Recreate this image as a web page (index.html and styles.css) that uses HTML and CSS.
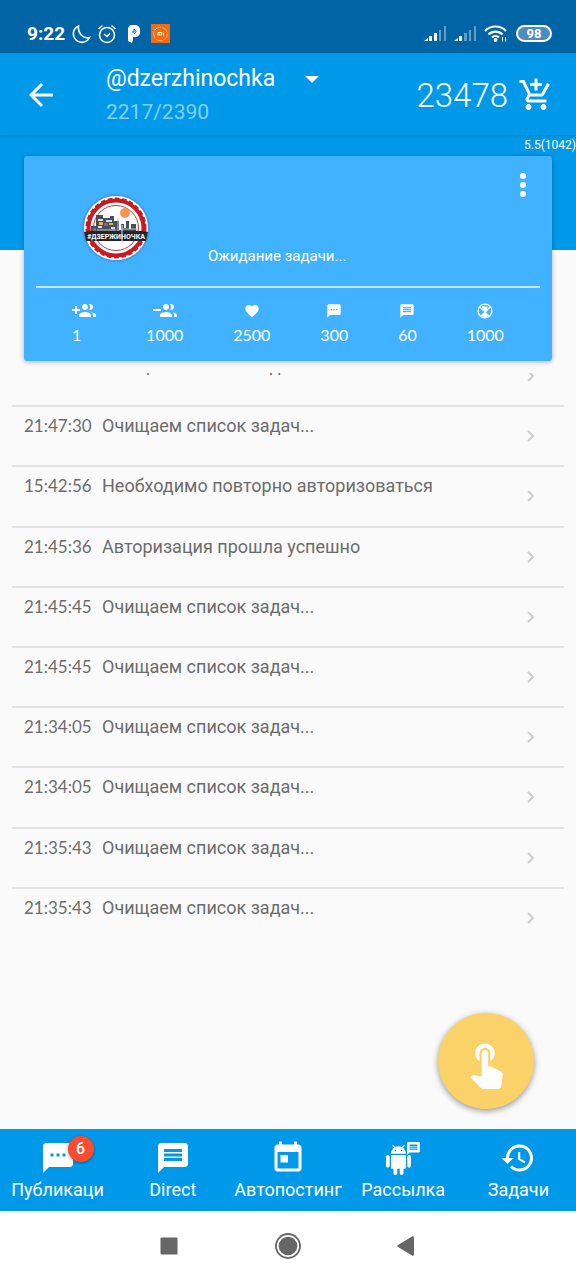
FILE: index.html
```html
<!DOCTYPE html>
<html lang="ru">
<head>
    <meta charset="UTF-8">
    <meta name="viewport" content="width=device-width, initial-scale=1.0">
    <title>@dzerzhinochka</title>
    <link rel="stylesheet" href="styles.css">
</head>
<body>

    <div class="status-bar">
        <span class="clock">9:22</span>
        <svg class="moon" width="20" height="20" viewBox="0 0 20 20"><path d="M7 2A8.500 8.500 0 1 0 18 13.500A9 10 0 0 1 7 2z" transform="translate(-.5 0)"/></svg>
        <svg class="alarm" width="20" height="20" viewBox="0 0 20 20"><circle cx="10" cy="11" r="7.500"/><path d="M1.500 5l4-3.500M18.500 5l-4-3.500M7 10l3 2.500 3-3"/></svg>
        <svg class="parking" width="14" height="20" viewBox="0 0 14 20"><path d="M3 1h7l3 3v6l-3 3H6v3l-1 3-4-2V4z" fill="#fff"/><path d="M5 8h2V5l2 2.500-2 2.500" fill="none" stroke="#0064a5"/></svg>
        <svg class="mi" width="19" height="19" viewBox="0 0 19 19"><path d="M0 0h19v19H0z" fill="#f26b10"/><circle cx="9.500" cy="10" r="6.800" fill="none" stroke="#ffc48e" stroke-width=".8" stroke-dasharray="7 1.500"/><path d="M7 11.500v-3h3.500v3M8.800 9.500v2M12.500 8.500v3M3.500 6l2.500-2" fill="none" stroke="#fff"/></svg>

        <div class="status-right">
            <svg width="22" height="16" viewBox="0 0 22 16"><path d="M0 15l4-3v3zM5 10h3v5H5zM10 7h3v8h-3z" fill="#fff"/><path d="M15 4h2v11h-2zM20 0h2v15h-2z" fill="#5f9cc8"/></svg>
            <svg width="22" height="16" viewBox="0 0 22 16"><path d="M0 15l4-3v3zM5 10h3v5H5z" fill="#fff"/><path d="M10 7h3v8h-3zM15 4h2v11h-2zM20 0h2v15h-2z" fill="#5f9cc8"/></svg>
            <svg class="wifi" width="24" height="19" viewBox="0 0 24 19"><path d="M1 7a14.500 14.500 0 0 1 21 0M4.500 10.500a10 10 0 0 1 14 0M8 13.500a5 5 0 0 1 7 0" fill="none" stroke="#fff" stroke-width="2.200"/><circle cx="11.500" cy="16" r="1.900" fill="#fff"/><path d="M18.500 13v4.500M21.500 13v4.500" stroke="#fff"/></svg>
            <span class="battery">98</span>
        </div>
    </div>

    <header class="app-bar">
        <button class="icon-btn back" aria-label="Назад">
            <svg width="36" height="36" viewBox="0 0 24 24"><path d="M20 11H7.830l5.590-5.590L12 4l-8 8 8 8 1.410-1.410L7.830 13H20v-2z"/></svg>
        </button>
        <div class="account">
            <label class="account-select">
                <select aria-label="Аккаунт">
                    <option>@dzerzhinochka</option>
                </select>
                <svg width="14" height="7" viewBox="0 0 14 7"><path d="M0 0h14L7 7z"/></svg>
            </label>
            <span class="account-count">2217/2390</span>
        </div>
        <span class="balance">23478</span>
        <button class="icon-btn" aria-label="Купить">
            <svg width="36" height="36" viewBox="0 0 24 24"><path d="M11 9h2V6h3V4h-3V1h-2v3H8v2h3v3zm-4 9c-1.100 0-1.990.9-1.990 2S5.900 22 7 22s2-.9 2-2-.9-2-2-2zm10 0c-1.100 0-1.990.9-1.990 2s.89 2 1.990 2 2-.9 2-2-.9-2-2-2zm-9.830-3.250l.03-.12.9-1.630h7.450c.75 0 1.410-.41 1.750-1.030l3.860-7.010L19.420 4h-.01l-1.100 2-2.760 5H8.530l-.13-.27L6.160 6l-.95-2-.94-2H1v2h2l3.600 7.590-1.350 2.450c-.16.28-.25.61-.25.96 0 1.100.9 2 2 2h12v-2H7.420c-.13 0-.25-.11-.25-.25z"/></svg>
        </button>
    </header>

    <main>
        <div class="hero">
            <span class="version">5.5(1042)</span>
        </div>

        <section class="card">
            <div class="card-top">
                <svg class="avatar" width="68" height="68" viewBox="0 0 68 68">
                    <circle cx="34" cy="34" r="33" fill="#fff" stroke="#3e9ce8" stroke-width="2"/>
                    <circle cx="34" cy="34" r="27.500" fill="#fff" stroke="#c91a22" stroke-width="4"/>
                    <circle cx="34" cy="34" r="28.500" fill="none" stroke="#c91a22" stroke-width="4" stroke-dasharray="4.500 2.500"/>
                    <circle cx="34" cy="34" r="22.500" fill="#fff" stroke="#b8404a"/>
                    <circle cx="43" cy="19" r="5" fill="#f79552"/>
                    <path d="M9 38v-6h5V21h7v3h7v-2h4v5h5v9h2v-6h3v4h2v-7h3v8h2v-5h5v10z" fill="#494f58"/>
                    <path d="M16 25h5v2h-5zM24 26h6v2h-6zM16 32h4v2h-4zM29 33h4v2h-4z" fill="#d7dde4"/>
                    <path d="M17 28h4v3h-4zM27 29h4v2h-4z" fill="#dfb449"/>
                    <path d="M22 29h4v3h-4zM11 34h3v3h-3zM31 35h4v3h-4z" fill="#8260a0"/>
                    <path d="M15 36h18M39 35h16M36 24v14" stroke="#b6c0c7" fill="none"/>
                    <path d="M2 38l7-1h50l7 1-2 9H4z" fill="#22262a"/>
                    <text x="34" y="45" text-anchor="middle">#ДЗЕРЖИНОЧКА</text>
                    <path d="M40 31v19" stroke="#dce0e2" stroke-width="1"/>
                </svg>
                <p class="card-status">Ожидание задачи...</p>
                <button class="icon-btn menu" aria-label="Меню">
                    <svg width="8" height="24" viewBox="0 0 8 24"><circle cx="4" cy="3" r="3"/><circle cx="4" cy="12" r="3"/><circle cx="4" cy="21" r="3"/></svg>
                </button>
            </div>
            <div class="stats">
                <div class="stat follow">
                    <svg width="24" height="24" viewBox="0 0 24 24"><path d="M8 10H5V7H3v3H0v2h3v3h2v-3h3v-2zm10 1c1.660 0 2.990-1.340 2.990-3S19.660 5 18 5c-.32 0-.63.05-.91.14.57.81.9 1.790.9 2.860s-.34 2.040-.9 2.860c.28.09.59.14.91.14zm-5 0c1.660 0 2.990-1.340 2.990-3S14.660 5 13 5c-1.660 0-3 1.340-3 3s1.340 3 3 3zm6.620 2.160c.83.73 1.380 1.660 1.380 2.840v2h3v-2c0-1.540-2.370-2.490-4.380-2.840zM13 13c-2 0-6 1-6 3v2h12v-2c0-2-4-3-6-3z"/></svg>
                    <span>1</span>
                </div>
                <div class="stat">
                    <svg width="24" height="24" viewBox="0 0 24 24"><path d="M0 10h8v2H0zm18 1c1.660 0 2.990-1.340 2.990-3S19.660 5 18 5c-.32 0-.63.05-.91.14.57.81.9 1.790.9 2.860s-.34 2.040-.9 2.860c.28.09.59.14.91.14zm-5 0c1.660 0 2.990-1.340 2.990-3S14.660 5 13 5c-1.660 0-3 1.340-3 3s1.340 3 3 3zm6.620 2.160c.83.73 1.380 1.660 1.380 2.840v2h3v-2c0-1.540-2.370-2.490-4.380-2.840zM13 13c-2 0-6 1-6 3v2h12v-2c0-2-4-3-6-3z"/></svg>
                    <span>1000</span>
                </div>
                <div class="stat">
                    <svg width="16" height="24" viewBox="0 0 24 24"><path d="M12 21.350l-1.450-1.320C5.400 15.360 2 12.280 2 8.500 2 5.420 4.420 3 7.500 3c1.740 0 3.410.81 4.500 2.090C13.090 3.810 14.760 3 16.500 3 19.580 3 22 5.420 22 8.500c0 3.780-3.400 6.860-8.550 11.540L12 21.350z"/></svg>
                    <span>2500</span>
                </div>
                <div class="stat">
                    <svg width="16" height="24" viewBox="0 0 24 24"><path d="M20 2H4c-1.100 0-1.990.9-1.990 2L2 22l4-4h14c1.100 0 2-.9 2-2V4c0-1.100-.9-2-2-2zM9 11H7V9h2v2zm4 0h-2V9h2v2zm4 0h-2V9h2v2z"/></svg>
                    <span>300</span>
                </div>
                <div class="stat">
                    <svg width="16" height="24" viewBox="0 0 24 24"><path d="M20 2H4c-1.100 0-1.990.9-1.990 2L2 22l4-4h14c1.100 0 2-.9 2-2V4c0-1.100-.9-2-2-2zM6 9h12v2H6V9zm12 5H6v-2h12v2zm0-6H6V6h12v2z"/></svg>
                    <span>60</span>
                </div>
                <div class="stat">
                    <svg width="16" height="24" viewBox="0 0 16 16"><circle cx="8" cy="8" r="6.900" fill="none" stroke="#fff" stroke-width="1.400"/><path d="M5 3.500h5.500l-.5 3.500-1.500 2 4 3.500q-4.500 3-9 0l4-3.500L5.500 7z"/><path d="M3 4.500l3 2.500M13 4l-4 4.500" fill="none" stroke="#fff" stroke-width="1.200"/></svg>
                    <span>1000</span>
                </div>
            </div>
        </section>

        <section class="log">
            <ul>
                <li><time>21:47:30</time><span>Очищаем список задач...</span><svg width="8" height="12" viewBox="0 0 8 12"><path d="M1 1l5 5-5 5"/></svg></li>
                <li><time>21:47:30</time><span>Очищаем список задач...</span><svg width="8" height="12" viewBox="0 0 8 12"><path d="M1 1l5 5-5 5"/></svg></li>
                <li><time>15:42:56</time><span>Необходимо повторно авторизоваться</span><svg width="8" height="12" viewBox="0 0 8 12"><path d="M1 1l5 5-5 5"/></svg></li>
                <li><time>21:45:36</time><span>Авторизация прошла успешно</span><svg width="8" height="12" viewBox="0 0 8 12"><path d="M1 1l5 5-5 5"/></svg></li>
                <li><time>21:45:45</time><span>Очищаем список задач...</span><svg width="8" height="12" viewBox="0 0 8 12"><path d="M1 1l5 5-5 5"/></svg></li>
                <li><time>21:45:45</time><span>Очищаем список задач...</span><svg width="8" height="12" viewBox="0 0 8 12"><path d="M1 1l5 5-5 5"/></svg></li>
                <li><time>21:34:05</time><span>Очищаем список задач...</span><svg width="8" height="12" viewBox="0 0 8 12"><path d="M1 1l5 5-5 5"/></svg></li>
                <li><time>21:34:05</time><span>Очищаем список задач...</span><svg width="8" height="12" viewBox="0 0 8 12"><path d="M1 1l5 5-5 5"/></svg></li>
                <li><time>21:35:43</time><span>Очищаем список задач...</span><svg width="8" height="12" viewBox="0 0 8 12"><path d="M1 1l5 5-5 5"/></svg></li>
                <li><time>21:35:43</time><span>Очищаем список задач...</span><svg width="8" height="12" viewBox="0 0 8 12"><path d="M1 1l5 5-5 5"/></svg></li>
            </ul>
        </section>

        <button class="fab" aria-label="Новая задача">
            <svg width="52" height="52" viewBox="0 0 24 24"><path d="M9 11.240V7.500C9 6.120 10.120 5 11.500 5S14 6.120 14 7.500v3.740c1.210-.81 2-2.180 2-3.740C16 5.010 13.990 3 11.500 3S7 5.010 7 7.500c0 1.560.79 2.930 2 3.740zm9.840 4.630l-4.540-2.260c-.17-.07-.35-.11-.54-.11H13v-6c0-.83-.67-1.500-1.500-1.500S10 6.670 10 7.500v10.740l-3.430-.72c-.08-.01-.15-.03-.24-.03-.31 0-.59.13-.79.33l-.79.8 4.940 4.940c.27.27.65.44 1.060.44h6.790c.75 0 1.330-.55 1.440-1.280l.75-5.270c.01-.07.02-.14.02-.2 0-.62-.38-1.160-.91-1.380z"/></svg>
        </button>
    </main>

    <nav class="tabs">
        <a href="#posts">
            <span class="tab-icon">
                <svg width="36" height="36" viewBox="0 0 24 24"><path d="M20 2H4c-1.100 0-1.990.9-1.990 2L2 22l4-4h14c1.100 0 2-.9 2-2V4c0-1.100-.9-2-2-2zM9 11H7V9h2v2zm4 0h-2V9h2v2zm4 0h-2V9h2v2z"/></svg>
                <span class="badge">6</span>
            </span>
            Публикаци
        </a>
        <a href="#direct">
            <span class="tab-icon"><svg width="36" height="36" viewBox="0 0 24 24"><path d="M20 2H4c-1.100 0-1.990.9-1.990 2L2 22l4-4h14c1.100 0 2-.9 2-2V4c0-1.100-.9-2-2-2zM6 9h12v2H6V9zm12 5H6v-2h12v2zm0-6H6V6h12v2z"/></svg></span>
            Direct
        </a>
        <a href="#autoposting">
            <span class="tab-icon"><svg width="36" height="36" viewBox="0 0 24 24"><path d="M19 3h-1V1h-2v2H8V1H6v2H5c-1.110 0-1.990.9-1.990 2L3 19c0 1.100.89 2 2 2h14c1.100 0 2-.9 2-2V5c0-1.100-.9-2-2-2zm0 16H5V8h14v11zM7 10h5v5H7z"/></svg></span>
            Автопостинг
        </a>
        <a href="#mailing">
            <span class="tab-icon"><svg width="36" height="36" viewBox="0 0 36 36">
                <path transform="translate(-1.500 5) scale(1.250)" d="M6 18c0 .55.45 1 1 1h1v3.500c0 .83.67 1.500 1.500 1.500s1.500-.67 1.500-1.500V19h2v3.500c0 .83.67 1.500 1.500 1.500s1.500-.67 1.500-1.500V19h1c.55 0 1-.45 1-1V8H6v10zM3.500 8C2.670 8 2 8.670 2 9.500v7c0 .83.67 1.500 1.500 1.500S5 17.330 5 16.500v-7C5 8.670 4.330 8 3.500 8zm17 0c-.83 0-1.500.67-1.500 1.500v7c0 .83.67 1.500 1.500 1.500s1.500-.67 1.500-1.500v-7c0-.83-.67-1.500-1.500-1.500zm-4.970-5.840l1.300-1.300c.2-.2.2-.51 0-.71-.2-.2-.51-.2-.71 0l-1.480 1.480C13.850 1.230 12.950 1 12 1c-.96 0-1.860.23-2.660.63L7.850.15c-.2-.2-.51-.2-.71 0-.2.2-.2.51 0 .71l1.310 1.310C6.970 3.260 6 5.010 6 7h12c0-1.990-.97-3.750-2.470-4.840zM10 5H9V4h1v1zm5 0h-1V4h1v1z"/>
                <path transform="translate(20.700 .7) scale(.65)" d="M20 2H4c-1.100 0-1.990.9-1.990 2L2 22l4-4h14c1.100 0 2-.9 2-2V4c0-1.100-.9-2-2-2zM6 9h12v2H6V9zm12 5H6v-2h12v2zm0-6H6V6h12v2z"/>
            </svg></span>
            Рассылка
        </a>
        <a href="#tasks">
            <span class="tab-icon"><svg width="36" height="36" viewBox="0 0 24 24"><path d="M13 3c-4.970 0-9 4.030-9 9H1l3.890 3.890.07.14L9 12H6c0-3.870 3.130-7 7-7s7 3.130 7 7-3.130 7-7 7c-1.930 0-3.680-.79-4.940-2.060l-1.420 1.420C8.270 19.990 10.510 21 13 21c4.970 0 9-4.030 9-9s-4.030-9-9-9zm-1 5v5l4.280 2.540.72-1.210-3.500-2.080V8H12z"/></svg></span>
            Задачи
        </a>
    </nav>

    <div class="system-nav">
        <button class="icon-btn" aria-label="Недавние"><svg width="28" height="28" viewBox="0 0 28 28"><rect x="5.500" y="5.500" width="17" height="17" rx="1"/></svg></button>
        <button class="icon-btn" aria-label="Домой"><svg width="28" height="28" viewBox="0 0 28 28"><circle cx="14" cy="14" r="12" fill="none" stroke="#666" stroke-width="1.800"/><circle cx="14" cy="14" r="9.300"/></svg></button>
        <button class="icon-btn" aria-label="Назад"><svg width="28" height="28" viewBox="0 0 28 28"><path d="M21 5.500v17q0 2-2 1L5 15q-1.500-1 0-2l14-8.500q2-1 2 1z"/></svg></button>
    </div>

</body>
</html>
```
FILE: styles.css
```css
* {
    box-sizing: border-box;
}

body {
    margin: 0;
    min-height: 100vh;
    display: flex;
    flex-direction: column;
    font-family: Roboto, "Noto Sans", sans-serif;
    background-color: #fafafa;
    color: #fff;
}

svg {
    display: block;
    flex: none;
    fill: currentColor;
}

.icon-btn {
    padding: 0;
    border: none;
    background: none;
    color: inherit;
    cursor: pointer;
}

/* Status bar */
.status-bar {
    display: flex;
    align-items: center;
    height: 53px;
    padding: 14px 24px 0 27px;
    background-color: #0064a5;
}

.clock {
    width: 45px;
    font-size: 19px;
    font-weight: bold;
}

.moon,
.alarm {
    fill: none;
    stroke: #fff;
    stroke-width: 1.6;
}

.alarm { margin-left: 5px; }
.parking { margin-left: 10px; }
.mi { margin-left: 10px; }

.status-right {
    display: flex;
    align-items: center;
    gap: 8px;
    margin-left: auto;
}

.battery {
    width: 36px;
    border: 2px solid #fff;
    border-radius: 9px;
    background-color: #4a8dbe;
    font-size: 13px;
    font-weight: bold;
    line-height: 13px;
    text-align: center;
}

/* App bar */
.app-bar {
    position: relative;
    z-index: 1;
    display: flex;
    align-items: center;
    height: 82px;
    padding: 2px 22px 0 23px;
    background-color: #0099e9;
    box-shadow: 0 1px 3px rgba(0, 0, 0, 0.15);
}

.account {
    margin-left: 47px;
}

.account-select {
    display: grid;
    align-items: center;
}

.account-select select,
.account-select svg {
    grid-area: 1 / 1;
}

.account-select select {
    appearance: none;
    padding: 0 43px 0 0;
    border: none;
    background: none;
    color: #fff;
    font-family: inherit;
    font-size: 23px;
    line-height: 34px;
}

.account-select svg {
    justify-self: end;
    pointer-events: none;
}

.account-count {
    display: block;
    font-size: 21px;
    line-height: 32px;
    color: #80d0f6;
}

.balance {
    margin-left: auto;
    margin-right: 10px;
    font-size: 33px;
    font-weight: 300;
}

/* Main */
main {
    position: relative;
    flex: 1;
    display: flex;
    flex-direction: column;
}

.hero {
    height: 115px;
    background-color: #0099e9;
    text-align: right;
    line-height: 17px;
}

.version {
    font-size: 12px;
}

.card {
    position: relative;
    margin: -94px 24px 0;
    padding: 0 12px;
    border-radius: 3px;
    background-color: #40b2ff;
    box-shadow: 0 1px 5px rgba(0, 0, 0, 0.3);
}

.card-top {
    display: flex;
    align-items: flex-start;
    height: 132px;
    padding: 17px 13px 0 46px;
    border-bottom: 2px solid #c6e6fb;
}

.avatar {
    margin-top: 21px;
}

.avatar text {
    fill: #fff;
    font-size: 7px;
    font-weight: bold;
}

.card-status {
    flex: 1;
    align-self: flex-end;
    margin: 0 0 20px 58px;
    font-size: 15px;
    line-height: 20px;
}

/* Counters */
.stats {
    display: flex;
    justify-content: center;
    gap: 50px;
    padding: 11px 0 14px;
}

.stat {
    display: flex;
    flex-direction: column;
    align-items: center;
    font-family: Lato, sans-serif;
    font-size: 16px;
    line-height: 24px;
}

.follow {
    align-items: flex-start;
}

/* Log */
.log {
    flex: 1;
    display: flex;
    margin: 12px 12px 182px;
    overflow: hidden;
}

/* first row is scrolled under the card */
.log ul {
    flex: 1;
    display: grid;
    grid-auto-rows: 1fr;
    margin: -28px 0 0;
    padding: 0;
    list-style: none;
    color: #6c6c6c;
}

.log li {
    display: grid;
    grid-template-columns: 67px 1fr auto;
    column-gap: 11px;
    align-items: start;
    padding: 9px 29px 0 12px;
    border-top: 2px solid #e3e3e3;
    font-size: 18px;
    line-height: 20px;
}

.log time {
    font-family: Lato, sans-serif;
    font-size: 17px;
}

.log svg {
    margin-top: 14px;
    fill: none;
    stroke: #ccc;
    stroke-width: 2;
}

.fab {
    position: absolute;
    right: 42px;
    bottom: 20px;
    display: flex;
    align-items: center;
    justify-content: center;
    width: 96px;
    height: 96px;
    padding: 4px 0 0;
    border: none;
    border-radius: 50%;
    background-color: #fbd268;
    color: #fff;
    box-shadow: 0 2px 6px rgba(0, 0, 0, 0.4);
    cursor: pointer;
}

/* Bottom tabs */
.tabs {
    display: grid;
    grid-template-columns: repeat(5, 1fr);
    height: 82px;
    padding-top: 11px;
    background-color: #0099e9;
}

.tabs a {
    display: flex;
    flex-direction: column;
    align-items: center;
    color: #fff;
    font-size: 18px;
    line-height: 28px;
    text-decoration: none;
}

.tab-icon {
    position: relative;
}

.badge {
    position: absolute;
    top: -4px;
    left: 28px;
    width: 26px;
    height: 26px;
    border-radius: 50%;
    background-color: #fc4c30;
    box-shadow: 0 1px 3px rgba(0, 0, 0, 0.4);
    font-size: 16px;
    font-weight: 500;
    line-height: 26px;
    text-align: center;
}

.system-nav {
    display: flex;
    align-items: center;
    justify-content: center;
    gap: 91px;
    height: 69px;
    background-color: #fff;
    color: #666;
}
```
